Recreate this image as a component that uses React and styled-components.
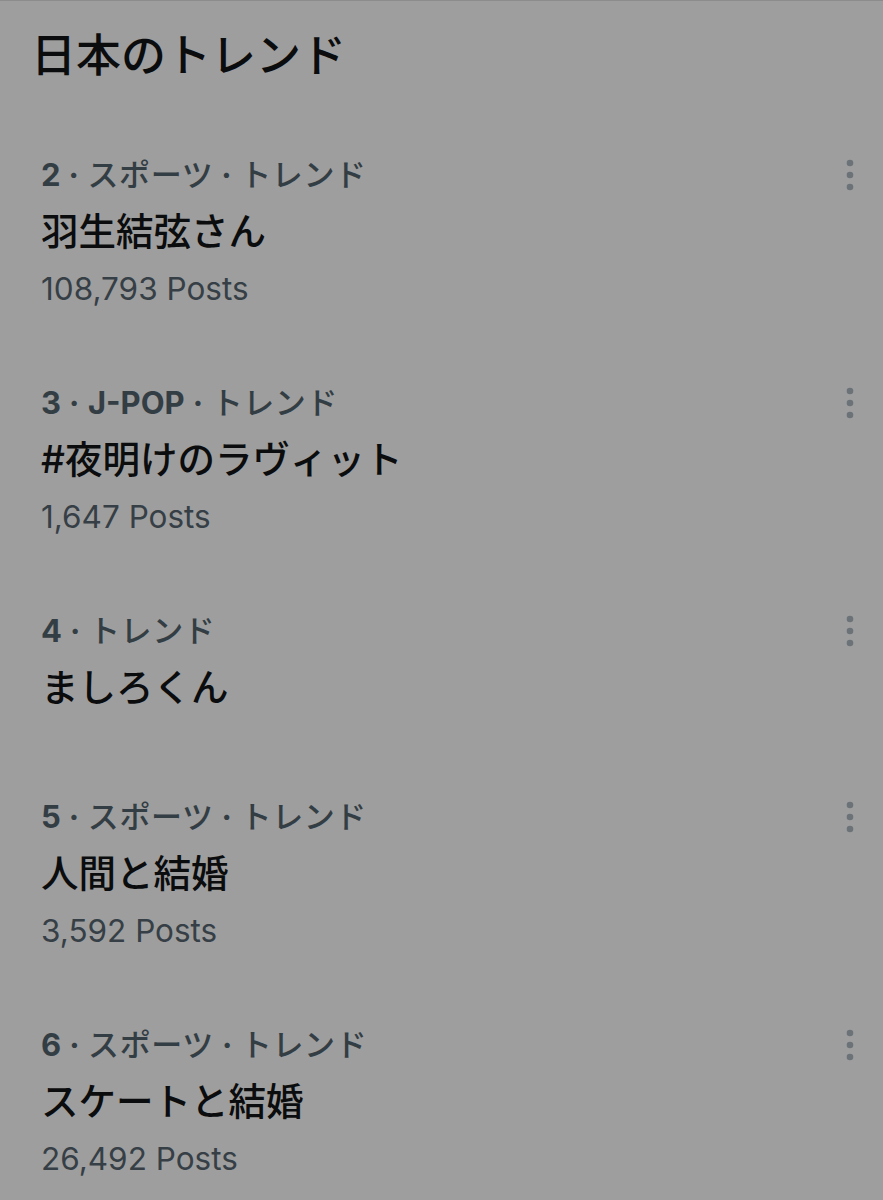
import React from "react"
import styled, { createGlobalStyle } from "styled-components"

const GlobalStyle = createGlobalStyle`
    html, body {
        margin: 0;
        padding: 0;
        background: #9e9e9e;
    }
    body {
        font-family: Inter, "Noto Sans CJK JP", sans-serif;
    }
`

const Page = styled.div`
    width: 883px;
    min-height: 1200px;
    background: #9e9e9e;
    border-top: 1px solid #8c8c8c;
    box-sizing: border-box;
`

const Heading = styled.h2`
    margin: 0;
    padding: 27px 0 0 31px;
    font-size: 45px;
    line-height: 56px;
    font-weight: 500;
    color: #0b0c0d;
    margin-bottom: 35px;
`

const List = styled.ul`
    list-style: none;
    margin: 0;
    padding: 0;
`

const Item = styled.li`
    padding: 36px 0 37px 41px;
`

const TopRow = styled.div`
    display: flex;
    align-items: center;
    justify-content: space-between;
`

const Category = styled.div`
    font-size: 31px;
    line-height: 40px;
    letter-spacing: 0.6px;
    color: #333d44;
    font-weight: 500;

    b {
        font-weight: 700;
        letter-spacing: 0;
    }
`

const Dot = styled.span`
    margin: 0 8px;
    font-weight: 700;
`

const MoreButton = styled.button`
    border: none;
    background: none;
    padding: 0;
    margin-right: 27px;
    width: 12px;
    height: 40px;
    display: flex;
    align-items: center;
    justify-content: center;
    cursor: pointer;
`

const Title = styled.div`
    margin: 15px 0 14px;
    font-size: 37.5px;
    line-height: 44px;
    font-weight: 500;
    color: #0b0c0d;
`

const Count = styled.div`
    font-size: 31.5px;
    line-height: 42px;
    color: #363f46;
`

const MoreIcon = () => (
    <svg width="8" height="32" viewBox="0 0 8 32">
        <circle cx="4" cy="4" r="3.3" fill="#6b7378" />
        <circle cx="4" cy="16" r="3.3" fill="#6b7378" />
        <circle cx="4" cy="28" r="3.3" fill="#6b7378" />
    </svg>
)

const trends = [
    { rank: 2, tags: ["スポーツ", "トレンド"], name: "羽生結弦さん", posts: "108,793" },
    { rank: 3, tags: ["J-POP", "トレンド"], name: "#夜明けのラヴィット", posts: "1,647" },
    { rank: 4, tags: ["トレンド"], name: "ましろくん" },
    { rank: 5, tags: ["スポーツ", "トレンド"], name: "人間と結婚", posts: "3,592" },
    { rank: 6, tags: ["スポーツ", "トレンド"], name: "スケートと結婚", posts: "26,492" },
]

const App = () => {
    return (
        <Page>
            <GlobalStyle />
            <Heading>日本のトレンド</Heading>
            <List>
                {trends.map((t) => (
                    <Item key={t.rank}>
                        <TopRow>
                            <Category>
                                <b>{t.rank}</b>
                                {t.tags.map((tag) => (
                                    <React.Fragment key={tag}>
                                        <Dot>·</Dot>
                                        {/^[A-Z-]+$/.test(tag) ? <b>{tag}</b> : tag}
                                    </React.Fragment>
                                ))}
                            </Category>
                            <MoreButton aria-label="More">
                                <MoreIcon />
                            </MoreButton>
                        </TopRow>
                        <Title>{t.name}</Title>
                        {t.posts && <Count>{t.posts} Posts</Count>}
                    </Item>
                ))}
            </List>
        </Page>
    )
}

export default App
